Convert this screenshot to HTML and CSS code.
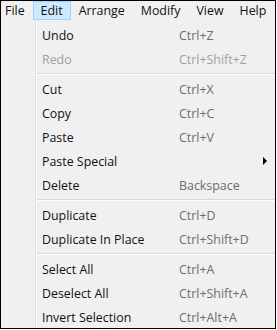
FILE: index.html
```html
<!DOCTYPE html>
<html lang="en">
<head>
    <meta charset="UTF-8">
    <title>Edit Menu</title>
    <link rel="stylesheet" href="styles.css">
</head>
<body>
    <div class="window">
        <div class="menubar">
            <span class="menu-title first">File</span>
            <span class="menu-title open">Edit</span>
            <span class="menu-title">Arrange</span>
            <span class="menu-title">Modify</span>
            <span class="menu-title">View</span>
            <span class="menu-title">Help</span>
        </div>
        <div class="dropdown">
            <div class="item"><span class="label">Undo</span><span class="key">Ctrl+Z</span></div>
            <div class="item disabled"><span class="label">Redo</span><span class="key">Ctrl+Shift+Z</span></div>
            <div class="separator"></div>
            <div class="item"><span class="label">Cut</span><span class="key">Ctrl+X</span></div>
            <div class="item"><span class="label">Copy</span><span class="key">Ctrl+C</span></div>
            <div class="item"><span class="label">Paste</span><span class="key">Ctrl+V</span></div>
            <div class="item"><span class="label">Paste Special</span><span class="key"></span><span class="arrow"></span></div>
            <div class="item"><span class="label">Delete</span><span class="key">Backspace</span></div>
            <div class="separator"></div>
            <div class="item"><span class="label">Duplicate</span><span class="key">Ctrl+D</span></div>
            <div class="item"><span class="label">Duplicate In Place</span><span class="key">Ctrl+Shift+D</span></div>
            <div class="separator"></div>
            <div class="item"><span class="label">Select All</span><span class="key">Ctrl+A</span></div>
            <div class="item"><span class="label">Deselect All</span><span class="key">Ctrl+Shift+A</span></div>
            <div class="item"><span class="label">Invert Selection</span><span class="key">Ctrl+Alt+A</span></div>
        </div>
    </div>
</body>
</html>
```

FILE: styles.css
```css
body {
    margin: 0;
    background: #fff;
    font-family: "Open Sans", "Noto Sans", sans-serif;
    font-size: 12.4px;
    color: #111;
}
.window {
    width: 274px;
    height: 327px;
    border: 1px solid #000;
    background: #f0f0f0;
    overflow: hidden;
}
.menubar {
    display: flex;
    height: 19px;
    align-items: center;
    background: #f0f0f0;
}
.menu-title {
    padding: 0 7px;
    height: 17px;
    line-height: 17px;
    border: 1px solid transparent;
    font-size: 12.4px;
    white-space: nowrap;
}
.menu-title.first {
    padding-left: 3px;
}
.menu-title.open {
    background: #cce8ff;
    border-color: #99d1ff;
}
.dropdown {
    padding-top: 3px;
    background: linear-gradient(to right, transparent 34px, #e0e0e0 34px, #e0e0e0 35px, #fff 35px, #fff 36px, transparent 36px);
}
.item {
    display: flex;
    align-items: center;
    height: 24px;
    padding-left: 41px;
}
.label {
    width: 137px;
}
.key {
    color: #6d6d6d;
}
.disabled .label,
.disabled .key {
    color: #a0a0a0;
}
.arrow {
    margin-left: auto;
    margin-right: 8px;
    width: 0;
    height: 0;
    border-top: 4px solid transparent;
    border-bottom: 4px solid transparent;
    border-left: 4px solid #000;
}
.separator {
    height: 1px;
    margin: 2px 0 2px 36px;
    background: #d7d7d7;
    border-bottom: 1px solid #fff;
}
```
